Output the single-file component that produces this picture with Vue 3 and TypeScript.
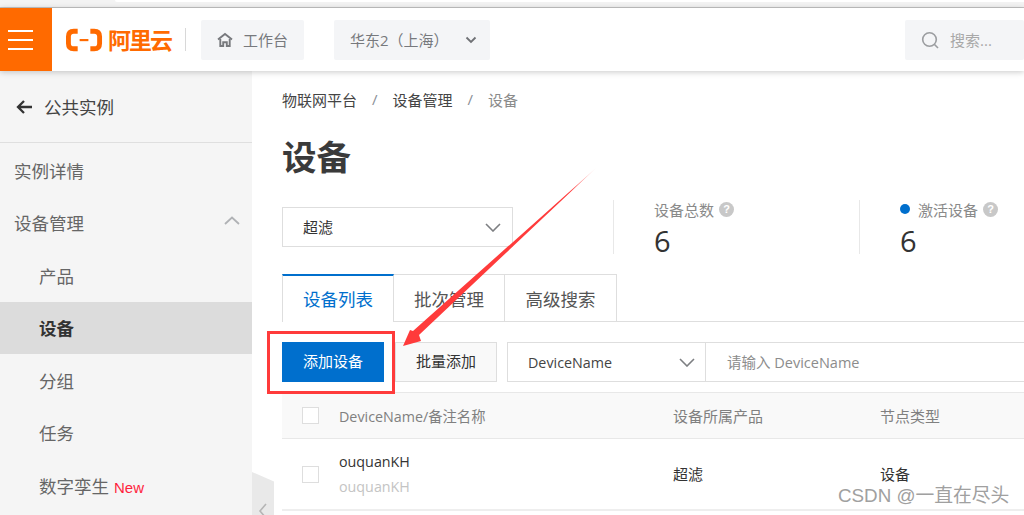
<template>
<div class="page">
	<div class="strip"><div class="strip-tab"></div></div>
	<header class="topbar">
		<div class="burger"><i></i><i></i><i></i></div>
		<div class="logo">
			<svg width="38" height="24" viewBox="0 0 38 24">
				<path d="M12 3H8C4.500 3 2.500 5 2.500 8.500V15.500C2.500 19 4.500 21 8 21H12" fill="none" stroke="#ff6a00" stroke-width="5" />
				<path d="M25 3H29C32.500 3 34.500 5 34.500 8.500V15.500C34.500 19 32.500 21 29 21H25" fill="none" stroke="#ff6a00" stroke-width="5" />
				<rect x="14" y="11" width="9" height="2.200" fill="#ff6a00" />
			</svg>
			<span class="logo-text">阿里云</span>
		</div>
		<div class="logo-sep"></div>
		<div class="chip chip-home">
			<svg width="16" height="16" viewBox="0 0 16 16" fill="none" stroke="#77797d" stroke-width="1.900">
				<path d="M1 7.500 8 2l7 5.500" />
				<path d="M3.300 7v7h2.900v-3.800h3.600V14h2.900V7" />
			</svg>
			<span>工作台</span>
		</div>
		<div class="chip chip-region">
			<span>华东2（上海）</span>
			<svg width="12" height="8" viewBox="0 0 12 8" fill="none" stroke="#6f7175" stroke-width="1.800"><path d="M1.500 1.500 6 6l4.500-4.500" /></svg>
		</div>
		<div class="chip chip-search">
			<svg width="18" height="18" viewBox="0 0 18 18" fill="none" stroke="#9b9da0" stroke-width="1.600">
				<circle cx="8.500" cy="8.500" r="6.800" />
				<path d="m13.500 13.500 3.500 3.500" />
			</svg>
			<span>搜索...</span>
		</div>
	</header>

	<div class="body">
		<aside class="side">
			<div class="side-back">
				<svg width="16" height="14" viewBox="0 0 16 14" fill="none" stroke="#333" stroke-width="2.300"><path d="M16 7H2M8 1 2 7l6 6" /></svg>
				<span>公共实例</span>
			</div>
			<nav class="side-nav">
				<div v-for="item in menu" :key="item.label" class="side-item" :class="{ sub: item.sub, active: item.active }">
					<span>{{ item.label }}</span>
					<em v-if="item.isNew">New</em>
					<svg v-if="item.open" class="side-arrow" width="16" height="9" viewBox="0 0 16 9" fill="none" stroke="#b0b2b5" stroke-width="1.800"><path d="M1 8 8 1.500 15 8" /></svg>
				</div>
			</nav>
		</aside>

		<main class="main">
			<div class="crumbs">
				<span>物联网平台</span><b>/</b><span>设备管理</span><b>/</b><span class="last">设备</span>
			</div>
			<h1>设备</h1>

			<div class="summary">
				<div class="product-select">
					<span>超滤</span>
					<svg width="16" height="9" viewBox="0 0 16 9" fill="none" stroke="#7d7f82" stroke-width="1.600"><path d="M1 1l7 7 7-7" /></svg>
				</div>
				<div v-for="s in stats" :key="s.label" class="stat" :class="{ dotted: s.dot }">
					<div class="stat-label">
						<i v-if="s.dot" class="dot"></i>
						<span>{{ s.label }}</span>
						<i class="help">?</i>
					</div>
					<div class="stat-num">{{ s.value }}</div>
				</div>
			</div>

			<div class="tabs">
				<div v-for="(t, i) in tabs" :key="t" class="tab" :class="{ on: i === 0 }">{{ t }}</div>
				<div class="tabs-rest"></div>
			</div>

			<div class="toolbar">
				<div class="btn primary">添加设备</div>
				<div class="btn">批量添加</div>
				<div class="search-group">
					<div class="field-select">
						<span>DeviceName</span>
						<svg width="16" height="9" viewBox="0 0 16 9" fill="none" stroke="#7d7f82" stroke-width="1.600"><path d="M1 1l7 7 7-7" /></svg>
					</div>
					<div class="field-input">请输入 DeviceName</div>
				</div>
			</div>

			<div class="thead">
				<div class="col-check"><i class="check"></i></div>
				<div class="col-name">DeviceName/备注名称</div>
				<div class="col-product">设备所属产品</div>
				<div class="col-type">节点类型</div>
			</div>
			<div class="trow">
				<div class="col-check"><i class="check"></i></div>
				<div class="col-name">
					<div>ouquanKH</div>
					<div class="remark">ouquanKH</div>
				</div>
				<div class="col-product">超滤</div>
				<div class="col-type">设备</div>
			</div>
		</main>
	</div>

	<!-- 折叠把手 -->
	<div class="handle">
		<svg width="10" height="16" viewBox="0 0 10 16" fill="none" stroke="#b5b5b5" stroke-width="1.600"><path d="M8 1 2 8l6 7" /></svg>
	</div>

	<!-- 截图上的标注 -->
	<div class="red-box"></div>
	<svg class="red-arrow" width="1024" height="515" viewBox="0 0 1024 515">
		<defs>
			<linearGradient id="fade" x1="596" y1="168" x2="570" y2="192" gradientUnits="userSpaceOnUse">
				<stop offset="0" stop-color="#ff3b3b" stop-opacity="0.150" />
				<stop offset="1" stop-color="#ff3b3b" />
			</linearGradient>
		</defs>
		<polygon points="596,168 419,335 421,341 403,346 410,330 413,331" fill="url(#fade)" />
	</svg>
	<div class="watermark">CSDN @一直在尽头</div>
</div>
</template>

<script setup lang="ts">
interface MenuItem {
	label: string
	sub?: boolean
	active?: boolean
	open?: boolean
	isNew?: boolean
}

const menu: MenuItem[] = [
	{ label: '实例详情' },
	{ label: '设备管理', open: true },
	{ label: '产品', sub: true },
	{ label: '设备', sub: true, active: true },
	{ label: '分组', sub: true },
	{ label: '任务', sub: true },
	{ label: '数字孪生', sub: true, isNew: true },
]

const stats = [
	{ label: '设备总数', value: 6, dot: false },
	{ label: '激活设备', value: 6, dot: true },
]

const tabs = ['设备列表', '批次管理', '高级搜索']
</script>

<style>
html, body { margin: 0; overflow: hidden; background: #fff; }
</style>

<style scoped>
.page {
	position: relative;
	width: 1024px;
	height: 515px;
	overflow: hidden;
	display: flex;
	flex-direction: column;
	font-family: "Open Sans", "Noto Sans CJK SC", sans-serif;
	color: #333;
}

.strip {
	height: 7px;
	flex: none;
	background: #f3f3f3;
	border-bottom: 1px solid #c4c4c4;
}
.strip-tab {
	margin-left: 115px;
	height: 2px;
	background: #fff;
	border-radius: 0 0 0 3px;
}

.topbar {
	position: relative;
	z-index: 2;
	flex: none;
	height: 63px;
	display: flex;
	align-items: center;
	background: #fff;
	box-shadow: 0 1px 6px rgba(0, 0, 0, 0.22);
}
.burger {
	width: 52px;
	height: 100%;
	flex: none;
	background: #ff6a00;
	display: flex;
	flex-direction: column;
	justify-content: center;
	gap: 7px;
	padding-left: 8px;
	box-sizing: border-box;
}
.burger i { display: block; width: 25px; height: 2px; background: #fff; }
.logo {
	display: flex;
	align-items: center;
	gap: 5px;
	margin-left: 14px;
	width: 105px;
}
.logo-text {
	font-size: 23px;
	line-height: 24px;
	letter-spacing: -2px;
	font-weight: 700;
	color: #ff6a00;
	white-space: nowrap;
}
.logo-sep {
	width: 1px;
	height: 23px;
	margin: 0 15px 0 14px;
	background: #d8d8d8;
}
.chip {
	height: 40px;
	display: flex;
	align-items: center;
	background: #f4f5f7;
	border-radius: 2px;
	font-size: 15px;
	color: #77797d;
	box-sizing: border-box;
}
.chip-home { width: 103px; padding-left: 16px; gap: 10px; }
.chip-region { width: 156px; margin-left: 30px; padding-left: 16px; gap: 16px; }
.chip-search { width: 119px; margin-left: auto; padding-left: 16px; gap: 11px; color: #a8a8a8; }

.body { flex: 1; display: flex; min-height: 0; }

.side { width: 252px; flex: none; background: #f5f5f5; }
.side-back {
	height: 71px;
	display: flex;
	align-items: center;
	gap: 12px;
	padding-left: 16px;
	font-size: 17.500px;
	border-bottom: 1px solid #dfdfdf;
	color: #444;
}
.side-nav { padding-top: 1px; }
.side-item {
	position: relative;
	height: 52.500px;
	display: flex;
	align-items: center;
	padding-left: 14px;
	font-size: 17.500px;
	color: #666;
}
.side-item.sub { padding-left: 39px; }
.side-item.active { background: #dcdcdc; font-weight: 700; color: #333; }
.side-item em {
	margin: 4px 0 0 5px;
	font-style: normal;
	font-size: 15px;
	color: #ff1f3d;
	font-family: "Liberation Sans", sans-serif;
}
.side-arrow { position: absolute; right: 12px; top: 19px; }

.main { flex: 1; min-width: 0; padding-left: 30px; }
.crumbs {
	display: flex;
	align-items: center;
	height: 20px;
	margin-top: 18px;
	font-size: 15px;
	color: #444;
	white-space: nowrap;
}
.crumbs b { font-weight: 400; color: #8a8f96; margin: 0 15px; }
.crumbs .last { color: #8b8b8b; }

h1 {
	margin: 26px 0 0;
	height: 44px;
	font-size: 34.500px;
	line-height: 44px;
	font-weight: 700;
	color: #3a3a3a;
}

.summary { display: flex; align-items: flex-start; margin-top: 21px; height: 74px; }
.product-select {
	width: 231px;
	height: 40px;
	margin-top: 7px;
	flex: none;
	display: flex;
	align-items: center;
	justify-content: space-between;
	padding: 0 11px 0 20px;
	box-sizing: border-box;
	border: 1px solid #dedede;
	font-size: 15px;
}
.product-select span { margin-top: -2px; }
.stat {
	height: 54px;
	margin-left: 100px;
	padding-left: 40px;
	width: 246px;
	flex: none;
	box-sizing: border-box;
	border-left: 1px solid #e8e8e8;
}
.stat.dotted { margin-left: 0; width: 165px; }
.stat-label {
	display: flex;
	align-items: center;
	height: 18px;
	font-size: 15px;
	color: #8a8a8a;
	white-space: nowrap;
}
.dot { width: 10px; height: 10px; margin-right: 8px; border-radius: 50%; background: #006fcd; }
.help {
	width: 15px;
	height: 15px;
	margin-left: 5px;
	border-radius: 50%;
	background: #c8c8c8;
	color: #fff;
	font: 700 11px/15px "Liberation Sans", sans-serif;
	text-align: center;
}
.stat-num { margin-top: 11px; font-size: 29px; line-height: 24px; color: #333; }

.tabs { display: flex; height: 48px; }
.tab {
	width: 111px;
	height: 48px;
	box-sizing: border-box;
	border: 1px solid #dedede;
	border-left: 0;
	text-align: center;
	line-height: 49px;
	font-size: 17.500px;
	color: #555;
}
.tab.on {
	width: 112px;
	border-left: 1px solid #dedede;
	border-top: 2px solid #006fcd;
	border-bottom: 0;
	line-height: 47px;
	color: #006fcd;
}
.tab:nth-child(3) { width: 112px; }
.tabs-rest { flex: 1; border-bottom: 1px solid #dedede; }

.toolbar { display: flex; margin-top: 20px; height: 40px; }
.btn {
	width: 102px;
	height: 40px;
	box-sizing: border-box;
	margin-right: 10px;
	background: #f9f9f9;
	border: 1px solid #dedede;
	text-align: center;
	line-height: 37px;
	font-size: 15px;
	color: #333;
}
.btn.primary { margin-right: 11px; background: #006fcd; border-color: #006fcd; color: #fff; }
.search-group { flex: 1; display: flex; min-width: 0; }
.field-select {
	width: 199px;
	flex: none;
	box-sizing: border-box;
	display: flex;
	align-items: center;
	justify-content: space-between;
	padding: 0 10px 0 20px;
	border: 1px solid #dedede;
	font-size: 14.300px;
	color: #444;
}
.field-input {
	flex: 1;
	box-sizing: border-box;
	border: 1px solid #dedede;
	border-width: 1px 0;
	padding-left: 21px;
	line-height: 39px;
	font-size: 14.500px;
	color: #8c8c8c;
	white-space: nowrap;
}

.thead, .trow { display: flex; align-items: center; font-size: 15px; }
.thead {
	margin-top: 10px;
	height: 47px;
	box-sizing: border-box;
	background: #f9f9f9;
	border-top: 1px solid #e8e8e8;
	border-bottom: 1px solid #e8e8e8;
	color: #808080;
}
.trow {
	height: 72px;
	box-sizing: border-box;
	border-bottom: 2px solid #eee;
	color: #333;
}
.trow .col-product, .trow .col-type { margin-top: -2px; }
.col-check { width: 57px; flex: none; padding-left: 20px; box-sizing: border-box; display: flex; }
.col-name { width: 334px; flex: none; font-size: 14.300px; }
.col-product { width: 207px; flex: none; }
.col-type { flex: none; }
.check {
	width: 17px;
	height: 17px;
	box-sizing: border-box;
	border: 1px solid #dedede;
	background: #fff;
}
.remark { margin-top: 5px; color: #c4c4c4; }
.trow .col-name > div { line-height: 20px; }

.handle {
	position: absolute;
	left: 252px;
	top: 472px;
	width: 22px;
	height: 43px;
	background: #e9e9e9;
	clip-path: polygon(0 0, 100% 22%, 100% 100%, 0 100%);
}
.handle svg { position: absolute; left: 6px; top: 31px; }

.red-box {
	position: absolute;
	left: 267px;
	top: 331px;
	width: 128px;
	height: 63px;
	box-sizing: border-box;
	border: 3px solid #ff3b3b;
}
.red-arrow { position: absolute; left: 0; top: 0; pointer-events: none; }
.watermark {
	position: absolute;
	left: 838px;
	top: 483px;
	font: 18.800px/26px "Liberation Sans", "Noto Sans CJK SC", sans-serif;
	color: #a0a0a0;
	text-shadow: 0 0 1px #fff;
	white-space: nowrap;
}
</style>
